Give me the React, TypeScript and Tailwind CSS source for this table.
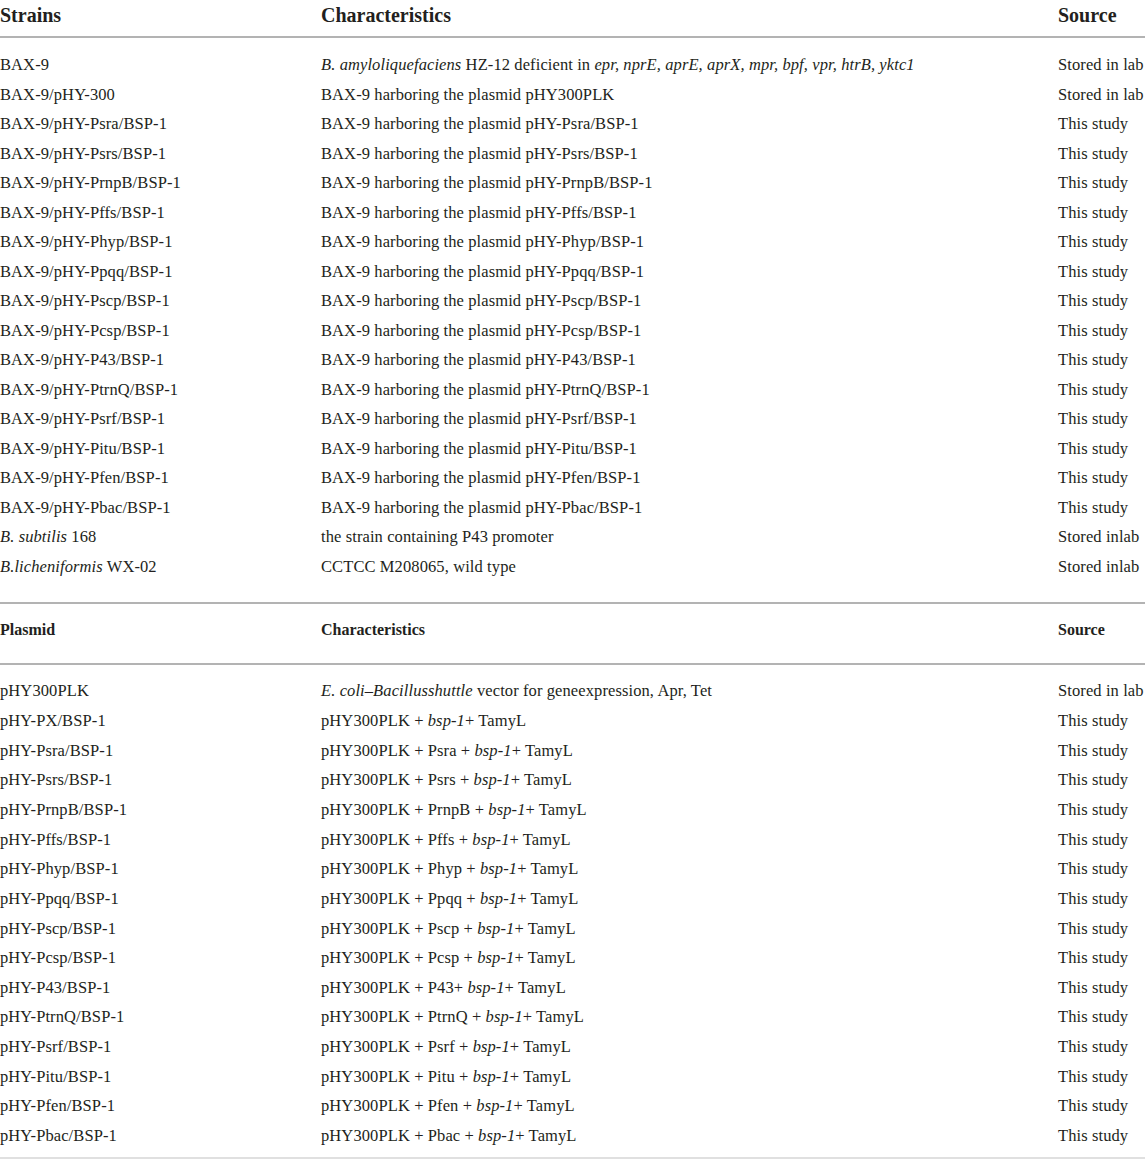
const strains: [React.ReactNode, React.ReactNode, string][] = [
  [
    "BAX-9",
    <>
      <i>B. amyloliquefaciens</i> HZ-12 deficient in <i>epr, nprE, aprE, aprX, mpr, bpf, vpr, htrB, yktc1</i>
    </>,
    "Stored in lab",
  ],
  ["BAX-9/pHY-300", "BAX-9 harboring the plasmid pHY300PLK", "Stored in lab"],
  ...["Psra", "Psrs", "PrnpB", "Pffs", "Phyp", "Ppqq", "Pscp", "Pcsp", "P43", "PtrnQ", "Psrf", "Pitu", "Pfen", "Pbac"].map(
    (p) => [`BAX-9/pHY-${p}/BSP-1`, `BAX-9 harboring the plasmid pHY-${p}/BSP-1`, "This study"] as [string, string, string]
  ),
  [
    <>
      <i>B. subtilis</i> 168
    </>,
    "the strain containing P43 promoter",
    "Stored inlab",
  ],
  [
    <>
      <i>B.licheniformis</i> WX-02
    </>,
    "CCTCC M208065, wild type",
    "Stored inlab",
  ],
];

const promoters = ["Psra", "Psrs", "PrnpB", "Pffs", "Phyp", "Ppqq", "Pscp", "Pcsp", "P43", "PtrnQ", "Psrf", "Pitu", "Pfen", "Pbac"];

const plasmids: [React.ReactNode, React.ReactNode, string][] = [
  [
    "pHY300PLK",
    <>
      <i>E. coli–Bacillusshuttle</i> vector for geneexpression, Apr, Tet
    </>,
    "Stored in lab",
  ],
  [
    "pHY-PX/BSP-1",
    <>
      pHY300PLK + <i>bsp-1</i>+ TamyL
    </>,
    "This study",
  ],
  ...promoters.map(
    (p) =>
      [
        `pHY-${p}/BSP-1`,
        <>
          pHY300PLK + {p === "P43" ? "P43+" : `${p} +`} <i>bsp-1</i>+ TamyL
        </>,
        "This study",
      ] as [React.ReactNode, React.ReactNode, string]
  ),
];

function Row({ cells, tall }: { cells: [React.ReactNode, React.ReactNode, string]; tall?: boolean }) {
  return (
    <div
      className={`grid grid-cols-[321px_737px_1fr] items-center whitespace-nowrap ${
        tall ? "h-[29.65px]" : "h-[29.5px]"
      }`}
    >
      <div>{cells[0]}</div>
      <div>{cells[1]}</div>
      <div>{cells[2]}</div>
    </div>
  );
}

export default function App() {
  return (
    <div className="w-[1145px] overflow-hidden bg-white text-[#231f20] text-[16.5px] tracking-[0.1px] [font-family:'Liberation_Serif',serif]">
      <div className="grid grid-cols-[321px_737px_1fr] h-[36px] items-center text-[20px] tracking-normal font-bold pb-[6px]">
        <div>Strains</div>
        <div>Characteristics</div>
        <div>Source</div>
      </div>
      <div className="border-t-2 border-[#b3b3b3] pt-[13px] pb-[20px]">
        {strains.map((r, i) => (
          <Row key={i} cells={r} />
        ))}
      </div>
      <div className="border-t-2 border-[#b3b3b3] grid grid-cols-[321px_737px_1fr] h-[61px] items-center text-[16px] tracking-normal font-bold pb-[7px]">
        <div>Plasmid</div>
        <div>Characteristics</div>
        <div>Source</div>
      </div>
      <div className="border-t-2 border-[#b3b3b3] pt-[12px] pb-[6px] border-b-2 border-b-[#e0e0e0]">
        {plasmids.map((r, i) => (
          <Row key={i} cells={r} tall />
        ))}
      </div>
    </div>
  );
}
